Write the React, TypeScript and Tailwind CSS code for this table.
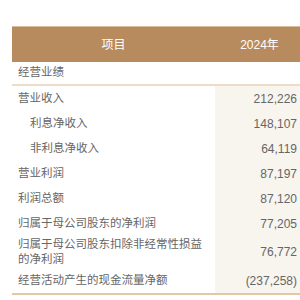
const rows = [
  { label: '营业收入', value: '212,226', indent: false, h: 'h-[25px]' },
  { label: '利息净收入', value: '148,107', indent: true, h: 'h-[25px]' },
  { label: '非利息净收入', value: '64,119', indent: true, h: 'h-[25px]' },
  { label: '营业利润', value: '87,197', indent: false, h: 'h-[25px]' },
  { label: '利润总额', value: '87,120', indent: false, h: 'h-[25px]' },
  { label: '归属于母公司股东的净利润', value: '77,205', indent: false, h: 'h-[25px]' },
  { label: '归属于母公司股东扣除非经常性损益的净利润', value: '76,772', indent: false, h: 'h-[32px]' },
  { label: '经营活动产生的现金流量净额', value: '(237,258)', indent: false, h: 'h-[25px]' },
]

export default function App() {
  return (
    <div
      className="w-[300px] h-[300px] overflow-hidden bg-white text-[12px] text-[#666]"
      style={{ fontFamily: '"Liberation Sans", "Noto Sans CJK SC", sans-serif' }}
    >
      <div className="ml-[12px] mt-[26px] w-[292px]">
        <div className="flex h-[36px] bg-[#b88b5f] border-t border-[#d9bc9a] text-white">
          <div className="w-[203px] flex items-center justify-center">项目</div>
          <div className="flex-1 flex items-center justify-center">2024年</div>
        </div>
        <div className="flex h-[24px] items-center pl-[6px] text-[11.5px] border-b-2 border-[#ecdcc8]">经营业绩</div>
        <div className="border-b-2 border-[#e3c8a6]">
          {rows.map((r) => (
            <div key={r.label} className={`flex ${r.h}`}>
              <div
                className={`w-[203px] flex items-center text-[11.5px] leading-[15px] pr-[8px] ${r.indent ? 'pl-[18px]' : 'pl-[6px]'}`}
              >
                {r.label}
              </div>
              <div className="flex-1 flex items-center justify-end pr-[7px] bg-[#f8f4ee]">{r.value}</div>
            </div>
          ))}
        </div>
      </div>
    </div>
  )
}
